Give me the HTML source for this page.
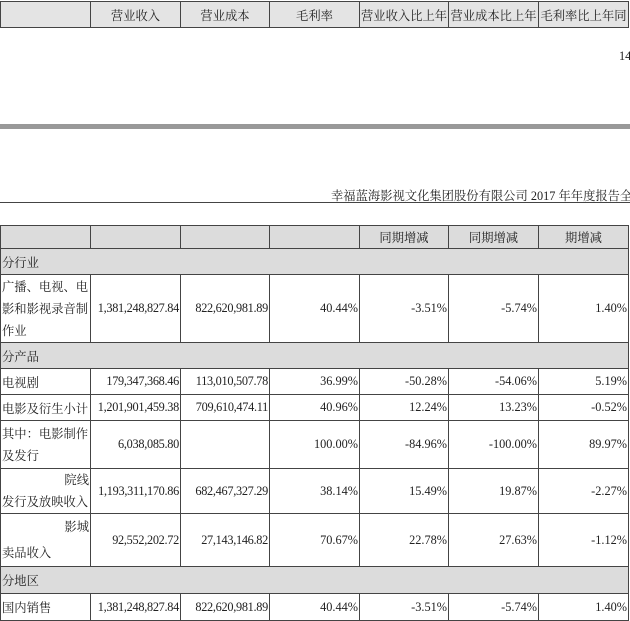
<!DOCTYPE html>
<html><head><meta charset="utf-8"><style>
body{margin:0;width:630px;height:617px;overflow:hidden;background:#fff;position:relative;font-family:"Liberation Serif","Noto Serif CJK SC",serif;font-size:12.3px;color:#222;}
table{border-collapse:collapse;position:absolute;left:0;table-layout:fixed;}
td{border:1px solid #444;padding:0 1px;white-space:nowrap;overflow:hidden;}
.g td{background:#dcdcdc;}
.r{text-align:right;}
.c{text-align:center;}
.n{letter-spacing:-0.3px;}
</style></head><body>
<table style="top:1px;width:628px">
<colgroup><col style="width:90px"><col style="width:90px"><col style="width:89px"><col style="width:90px"><col style="width:89px"><col style="width:90px"><col style="width:90px"></colgroup>
<tr style="height:26px;background:#e4e4e4"><td></td><td class="c">营业收入</td><td class="c">营业成本</td><td class="c">毛利率</td><td class="c">营业收入比上年</td><td class="c">营业成本比上年</td><td class="c">毛利率比上年同</td></tr>
</table>
<div style="position:absolute;left:619px;top:49px">14</div>
<div style="position:absolute;left:0;top:124px;width:630px;height:5px;background:#999"></div>
<div style="position:absolute;left:331px;top:186px;white-space:nowrap">幸福蓝海影视文化集团股份有限公司 2017 年年度报告全文</div>
<div style="position:absolute;left:0;top:202px;width:630px;height:1px;background:#444"></div>
<table style="top:225px;width:628px">
<colgroup><col style="width:90px"><col style="width:90px"><col style="width:89px"><col style="width:90px"><col style="width:89px"><col style="width:90px"><col style="width:90px"></colgroup>
<tr class="g" style="height:23px"><td></td><td></td><td></td><td></td><td class="c">同期增减</td><td class="c">同期增减</td><td class="c">期增减</td></tr>
<tr class="g" style="height:26px"><td colspan="7">分行业</td></tr>
<tr style="height:68px"><td style="white-space:normal;line-height:22px;word-break:break-all">广播、电视、电影和影视录音制作业</td><td class="r n">1,381,248,827.84</td><td class="r n">822,620,981.89</td><td class="r">40.44%</td><td class="r">-3.51%</td><td class="r">-5.74%</td><td class="r">1.40%</td></tr>
<tr class="g" style="height:26px"><td colspan="7">分产品</td></tr>
<tr style="height:26px"><td>电视剧</td><td class="r n">179,347,368.46</td><td class="r n">113,010,507.78</td><td class="r">36.99%</td><td class="r">-50.28%</td><td class="r">-54.06%</td><td class="r">5.19%</td></tr>
<tr style="height:26px"><td>电影及衍生小计</td><td class="r n">1,201,901,459.38</td><td class="r n">709,610,474.11</td><td class="r">40.96%</td><td class="r">12.24%</td><td class="r">13.23%</td><td class="r">-0.52%</td></tr>
<tr style="height:48px"><td style="white-space:normal;line-height:22px;word-break:break-all">其中：电影制作及发行</td><td class="r n">6,038,085.80</td><td class="r"></td><td class="r">100.00%</td><td class="r">-84.96%</td><td class="r">-100.00%</td><td class="r">89.97%</td></tr>
<tr style="height:45px"><td style="line-height:22px"><div class="r">院线</div>发行及放映收入</td><td class="r n">1,193,311,170.86</td><td class="r n">682,467,327.29</td><td class="r">38.14%</td><td class="r">15.49%</td><td class="r">19.87%</td><td class="r">-2.27%</td></tr>
<tr style="height:48px"><td style="line-height:26px"><div class="r">影城</div>卖品收入</td><td class="r n">92,552,202.72</td><td class="r n">27,143,146.82</td><td class="r">70.67%</td><td class="r">22.78%</td><td class="r">27.63%</td><td class="r">-1.12%</td></tr>
<tr class="g" style="height:27px"><td colspan="7">分地区</td></tr>
<tr style="height:27px"><td>国内销售</td><td class="r n">1,381,248,827.84</td><td class="r n">822,620,981.89</td><td class="r">40.44%</td><td class="r">-3.51%</td><td class="r">-5.74%</td><td class="r">1.40%</td></tr>
</table>
</body></html>
